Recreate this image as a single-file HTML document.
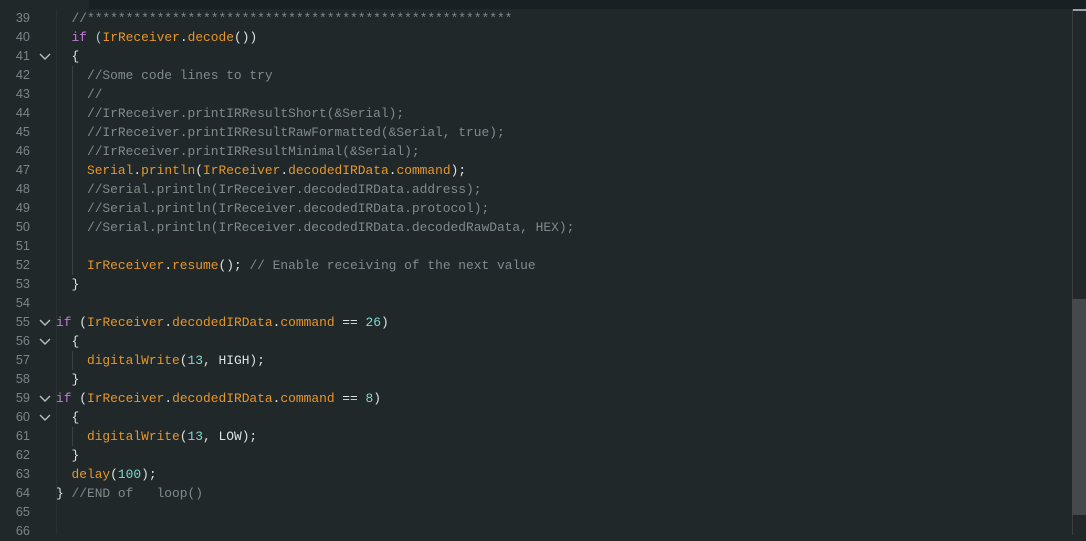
<!DOCTYPE html>
<html><head><style>
body{margin:0;width:1086px;height:535px;background:#212829;overflow:hidden;position:relative;font-family:"Liberation Mono",monospace;}
.top{position:absolute;left:89px;top:0;width:997px;height:9px;background:#192023;}
.gut{position:absolute;left:56px;top:9px;width:1px;height:526px;background:#2a3133;}
.sb{position:absolute;left:1072px;top:9px;width:14px;height:526px;background:#222829;border-left:1px solid #3a4042;}
.thumb{position:absolute;left:1072px;top:299px;width:14px;height:216px;background:#45494c;}
.sbt{position:absolute;left:1073px;top:9px;width:13px;height:2px;background:#9aa0a3;}
.ln{position:absolute;left:0;width:30px;text-align:right;font-size:12.7px;color:#7a8487;line-height:19px;font-family:"Liberation Sans",sans-serif;}
.f{position:absolute;left:38px;width:14px;height:19px;}
.c{position:absolute;left:56px;font-size:12.9px;line-height:19px;white-space:pre;color:#dce3e3;}
.k{color:#c07ad6}.o{color:#e8952a}.m{color:#7e8b8e}.n{color:#7fd8cf}.p{color:#9ec9d6}
.g{position:absolute;width:1px;background:#3a4244;}
</style></head><body>
<div class="top"></div>
<div class="gut"></div>
<div class="g" style="left:72px;top:66px;height:209px"></div>
<div class="g" style="left:72px;top:351px;height:19px"></div>
<div class="g" style="left:72px;top:427px;height:19px"></div>
<div class="sb"></div><div class="thumb"></div><div class="sbt"></div>
<div id="L"></div>
<script>
const lines=[
'  <span class="m">//*******************************************************</span>',
'  <span class="k">if</span> <span class="p">(</span><span class="o">IrReceiver</span>.<span class="o">decode</span>())',
'  {',
'    <span class="m">//Some code lines to try</span>',
'    <span class="m">//</span>',
'    <span class="m">//IrReceiver.printIRResultShort(&amp;Serial);</span>',
'    <span class="m">//IrReceiver.printIRResultRawFormatted(&amp;Serial, true);</span>',
'    <span class="m">//IrReceiver.printIRResultMinimal(&amp;Serial);</span>',
'    <span class="o">Serial</span>.<span class="o">println</span>(<span class="o">IrReceiver</span>.<span class="o">decodedIRData</span>.<span class="o">command</span>);',
'    <span class="m">//Serial.println(IrReceiver.decodedIRData.address);</span>',
'    <span class="m">//Serial.println(IrReceiver.decodedIRData.protocol);</span>',
'    <span class="m">//Serial.println(IrReceiver.decodedIRData.decodedRawData, HEX);</span>',
'',
'    <span class="o">IrReceiver</span>.<span class="o">resume</span>(); <span class="m">// Enable receiving of the next value</span>',
'  }',
'',
'<span class="k">if</span> (<span class="o">IrReceiver</span>.<span class="o">decodedIRData</span>.<span class="o">command</span> == <span class="n">26</span>)',
'  {',
'    <span class="o">digitalWrite</span>(<span class="n">13</span>, HIGH);',
'  }',
'<span class="k">if</span> (<span class="o">IrReceiver</span>.<span class="o">decodedIRData</span>.<span class="o">command</span> == <span class="n">8</span>)',
'  {',
'    <span class="o">digitalWrite</span>(<span class="n">13</span>, LOW);',
'  }',
'  <span class="o">delay</span>(<span class="n">100</span>);',
'} <span class="m">//END of   loop()</span>',
'',''];
const folds=[41,55,56,59,60];
let h='';
lines.forEach((t,i)=>{const n=39+i,y=9+i*19;
h+=`<div class="ln" style="top:${y}px">${n}</div><div class="c" style="top:${y}px">${t}</div>`;
if(folds.includes(n))h+=`<svg class="f" style="top:${y}px" viewBox="0 0 14 19"><path d="M2 7l5 5 5-5" fill="none" stroke="#b8c0c2" stroke-width="1.4"/></svg>`;});
document.getElementById('L').innerHTML=h;
</script>
</body></html>
